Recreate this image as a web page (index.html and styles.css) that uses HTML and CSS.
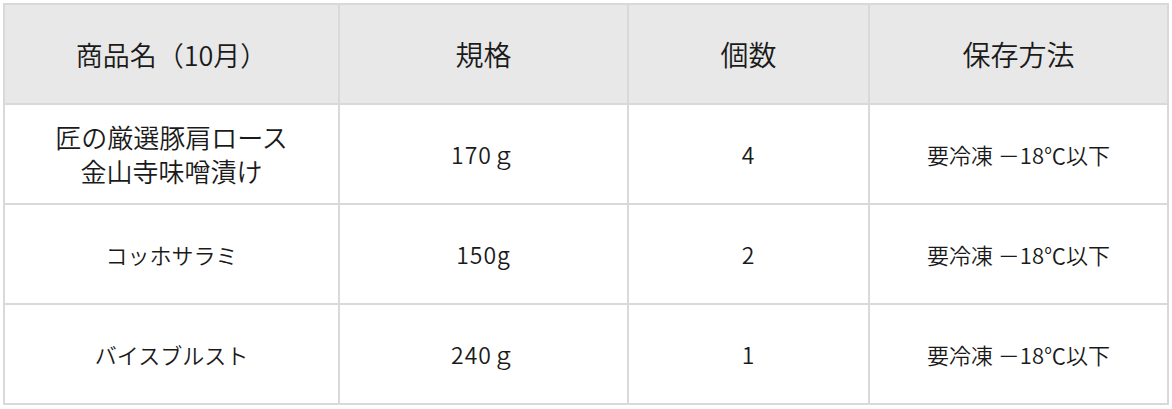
FILE: index.html
```html
<!DOCTYPE html>
<html lang="ja">
<head>
<meta charset="utf-8">
<title>商品一覧</title>
<link rel="stylesheet" href="styles.css">
</head>
<body>
<table class="spec">
  <thead>
    <tr>
      <th class="c-name">商品名（10月）</th>
      <th class="c-size">規格</th>
      <th class="c-qty">個数</th>
      <th class="c-store">保存方法</th>
    </tr>
  </thead>
  <tbody>
    <tr>
      <td class="big">匠の厳選豚肩ロース<br>金山寺味噌漬け</td>
      <td class="num">170ｇ</td>
      <td class="num">4</td>
      <td>要冷凍 －18℃以下</td>
    </tr>
    <tr>
      <td>コッホサラミ</td>
      <td class="num">150g</td>
      <td class="num">2</td>
      <td>要冷凍 －18℃以下</td>
    </tr>
    <tr>
      <td>バイスブルスト</td>
      <td class="num">240ｇ</td>
      <td class="num">1</td>
      <td>要冷凍 －18℃以下</td>
    </tr>
  </tbody>
</table>
</body>
</html>
```
FILE: styles.css
```css
html, body {
  margin: 0;
  padding: 0;
  background: #ffffff;
}

body {
  padding: 3px;
  font-family: "Noto Sans CJK JP", "Noto Sans", sans-serif;
  font-weight: 350;
  color: #1a1a1a;
}

.spec {
  table-layout: fixed;
  width: 1166px;
  border-collapse: separate;
  border-spacing: 2px;
  background: #d9d9d9;
}

.spec th,
.spec td {
  box-sizing: border-box;
  height: 98px;
  padding: 0;
  text-align: center;
  vertical-align: middle;
  background: #ffffff;
}

.spec th {
  background: #e8e8e8;
  font-weight: 350;
  font-size: 28px;
}

.spec th.c-name {
  font-size: 27px;
}

.spec td {
  font-size: 22px;
  line-height: 1.4;
}

.spec td.num {
  font-size: 23px;
  letter-spacing: 1px;
}

.spec td.big {
  font-size: 26px;
  line-height: 1.3;
}

.c-name { width: 333px; }
.c-size { width: 287px; }
.c-qty { width: 239px; }
.c-store { width: 297px; }
```
